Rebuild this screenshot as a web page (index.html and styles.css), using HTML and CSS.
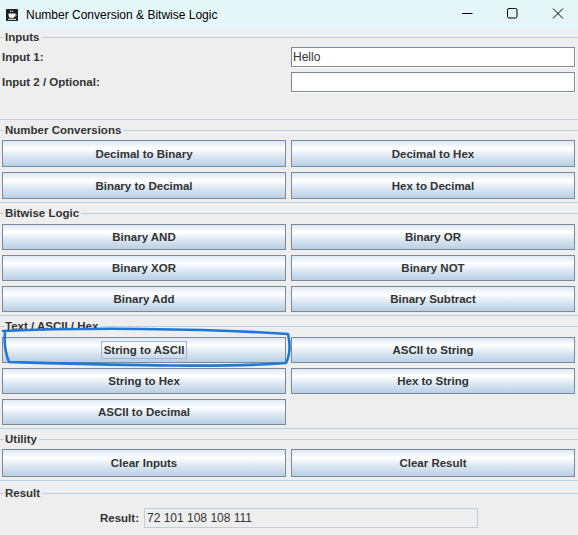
FILE: index.html
```html
<!DOCTYPE html>
<html lang="en">
<head>
<meta charset="utf-8">
<title>Number Conversion &amp; Bitwise Logic</title>
<link rel="stylesheet" href="styles.css">
</head>
<body>
<div class="window">
  <div class="titlebar">
    <svg class="app-icon" width="12" height="12" viewBox="0 0 12 12">
      <rect x="0" y="0" width="12" height="12" rx="1" fill="#1e1e1e"/>
      <path d="M4 1.5 L5 3 M6 1.5 L7 3" stroke="#fff" stroke-width="0.9" fill="none"/>
      <path d="M2.5 4.5 H9 V6 Q9 9 5.75 9 Q2.5 9 2.5 6 Z" fill="#fff"/>
      <path d="M9 5 Q10.5 5 10 6.5 Q9.6 7.3 8.6 7.2" stroke="#fff" stroke-width="0.8" fill="none"/>
      <rect x="2" y="9.8" width="8" height="1" fill="#fff"/>
    </svg>
    <span class="title">Number Conversion &amp; Bitwise Logic</span>
    <svg class="controls" width="128" height="29" viewBox="0 0 128 29">
      <line x1="12" y1="13.5" x2="22.5" y2="13.5" stroke="#000" stroke-width="1"/>
      <rect x="57.5" y="8.5" width="9.5" height="9.5" rx="1.5" fill="none" stroke="#000" stroke-width="1"/>
      <path d="M103 8.5 L113 18.5 M113 8.5 L103 18.5" stroke="#000" stroke-width="1" fill="none"/>
    </svg>
  </div>

  <div class="content">
    <section class="group inputs">
      <div class="legend"><span>Inputs</span></div>
      <div class="grid fields">
        <label class="lbl" for="in1">Input 1:</label>
        <input class="field" id="in1" type="text" value="Hello">
        <label class="lbl" for="in2">Input 2 / Optional:</label>
        <input class="field" id="in2" type="text" value="">
      </div>
    </section>

    <section class="group nc">
      <div class="legend"><span>Number Conversions</span></div>
      <div class="grid buttons">
        <button class="btn">Decimal to Binary</button>
        <button class="btn">Decimal to Hex</button>
        <button class="btn">Binary to Decimal</button>
        <button class="btn">Hex to Decimal</button>
      </div>
    </section>

    <section class="group bl">
      <div class="legend"><span>Bitwise Logic</span></div>
      <div class="grid buttons">
        <button class="btn">Binary AND</button>
        <button class="btn">Binary OR</button>
        <button class="btn">Binary XOR</button>
        <button class="btn">Binary NOT</button>
        <button class="btn">Binary Add</button>
        <button class="btn">Binary Subtract</button>
      </div>
    </section>

    <section class="group tx">
      <div class="legend"><span>Text / ASCII / Hex</span></div>
      <div class="grid buttons">
        <button class="btn"><span class="focus">String to ASCII</span></button>
        <button class="btn">ASCII to String</button>
        <button class="btn">String to Hex</button>
        <button class="btn">Hex to String</button>
        <button class="btn">ASCII to Decimal</button>
      </div>
    </section>

    <section class="group ut">
      <div class="legend"><span>Utility</span></div>
      <div class="grid buttons">
        <button class="btn">Clear Inputs</button>
        <button class="btn">Clear Result</button>
      </div>
    </section>

    <section class="group result">
      <div class="legend"><span>Result</span></div>
      <div class="result-row">
        <span class="lbl">Result:</span>
        <div class="result-field">72 101 108 108 111</div>
      </div>
    </section>
  </div>

  <svg class="annotation" width="578" height="535" viewBox="0 0 578 535">
    <path d="M3 331 C 80 327.5, 200 328, 288 334 C 290.5 345, 290 355, 286 363 C 220 368, 120 365, 9 362 C 5 352, 4 342, 5 333" fill="none" stroke="#1e78d6" stroke-width="2.6" stroke-linecap="round" stroke-linejoin="round"/>
  </svg>
</div>
</body>
</html>
```

FILE: styles.css
```css
* {
  box-sizing: border-box;
}

html, body {
  margin: 0;
  padding: 0;
  background: #eeeeee;
}

.window {
  position: relative;
  width: 578px;
  height: 535px;
  overflow: hidden;
  background: #eeeeee;
  font-family: "Liberation Sans", Arial, sans-serif;
  color: #333333;
}

.titlebar {
  height: 29px;
  background: #e5f6f8;
  display: flex;
  align-items: center;
}

.app-icon {
  margin-left: 6px;
  margin-top: 1px;
  flex: none;
}

.title {
  margin-left: 8px;
  font-family: "Liberation Sans", Arial, sans-serif;
  font-size: 12px;
  color: #000;
}

.controls {
  margin-left: auto;
  flex: none;
}

.group {
  border-bottom: 1px solid #b8cfe5;
  padding-bottom: 3px;
  margin-top: 4px;
}

.legend {
  height: 13px;
  line-height: 13px;
  font-size: 11.5px;
  font-weight: bold;
  color: #333;
  background: linear-gradient(#b8cfe5, #b8cfe5) 0 6px / 100% 1px no-repeat;
}

.legend span {
  display: inline-block;
  background: #eeeeee;
  margin-left: 4px;
  padding: 0 2px 0 1px;
}

.inputs {
  margin-top: 2px;
  border-bottom-color: #c3cbdb;
  padding-bottom: 27px;
}

.inputs .legend {
  background-image: linear-gradient(#c3cbdb, #c3cbdb);
}

.grid {
  display: grid;
  grid-template-columns: 284px 284px;
  column-gap: 5px;
  padding: 0 3px 0 2px;
}

.fields {
  margin-top: 3px;
  row-gap: 5px;
}

.lbl {
  font-size: 11.5px;
  font-weight: bold;
  color: #333;
  display: flex;
  align-items: center;
}

.field {
  width: 284px;
  height: 20px;
  margin: 0;
  padding: 0 0 0 1px;
  border: 1px solid #7a8a99;
  box-shadow: 1px 1px 0 #ffffff;
  background: #ffffff;
  font-family: "Liberation Sans", Arial, sans-serif;
  font-size: 12px;
  color: #333;
  outline: none;
}

.buttons {
  row-gap: 5px;
  margin-top: 4px;
}

.btn {
  appearance: none;
  margin: 0;
  padding: 0;
  height: 26px;
  border: 1px solid #7a8a99;
  border-radius: 0;
  background: linear-gradient(to bottom, #dde8f3 0%, #ffffff 30%, #dde8f3 60%, #b8cfe5 100%);
  font-family: "Liberation Sans", Arial, sans-serif;
  font-size: 11.5px;
  font-weight: bold;
  color: #333;
  display: flex;
  align-items: center;
  justify-content: center;
}

.nc .buttons {
  margin-top: 3px;
}

.nc .btn {
  height: 27px;
}

.ut .buttons {
  margin-top: 3px;
}

.ut .btn {
  height: 28px;
}

.focus {
  display: inline-block;
  border: 1px solid #a3b8cc;
  padding: 1px 2px;
  line-height: 14px;
}

.result {
  margin-top: 6px;
  border-bottom: none;
}

.result-row {
  margin-top: 8px;
  display: flex;
  justify-content: center;
  align-items: center;
  column-gap: 5px;
}

.result-field {
  width: 334px;
  height: 20px;
  border: 1px solid #b8cfe5;
  background: #eeeeee;
  font-size: 12px;
  line-height: 18px;
  padding-left: 2px;
  color: #333;
}

.annotation {
  position: absolute;
  left: 0;
  top: 0;
  pointer-events: none;
}
```
